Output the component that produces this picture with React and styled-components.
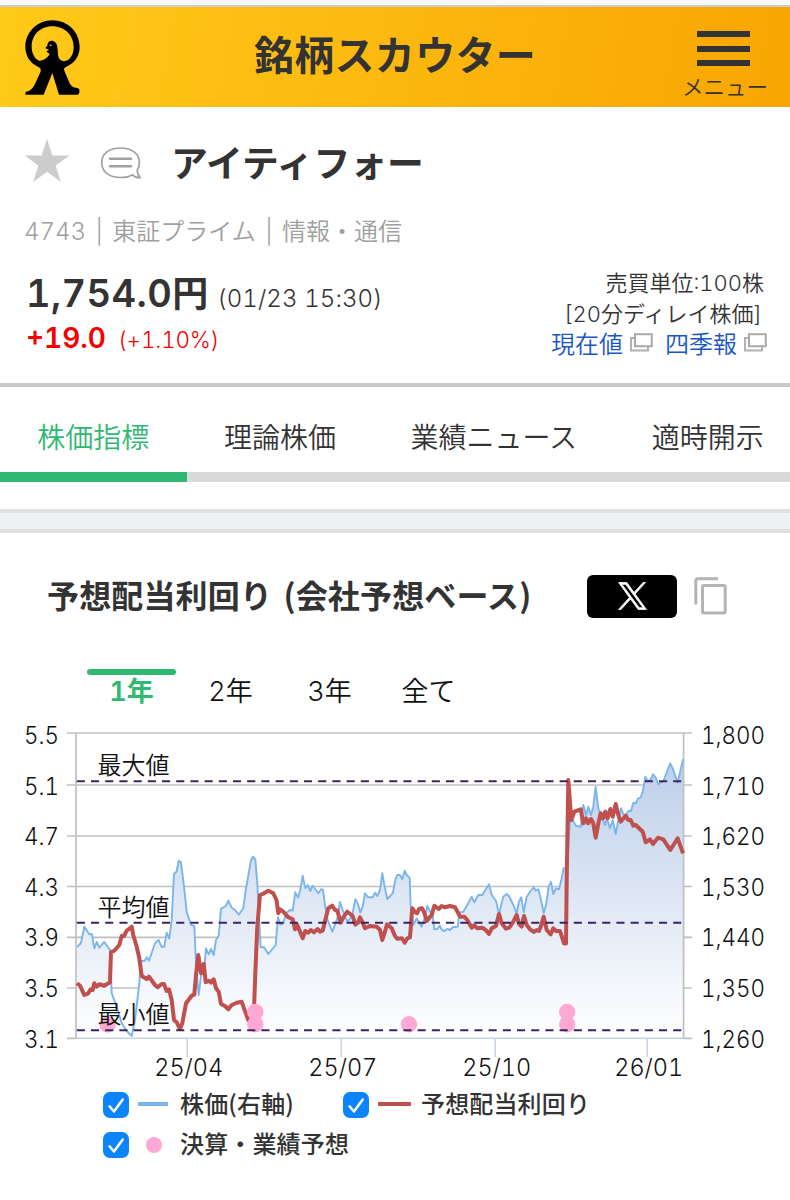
import React from "react"
import styled, { createGlobalStyle, ThemeProvider } from "styled-components"

const theme = {
  fonts: `"Inter", "Noto Sans CJK JP", sans-serif`,
  colors: {
    text: "#333333",
    green: "#2fb872",
    red: "#f50000",
    link: "#1a56c4",
    price: "#7cb5ec",
    yieldLine: "#c0504d",
    event: "#ffa8d4",
    muted: "#a0a0a0",
  },
}

const GlobalStyle = createGlobalStyle`
  * {
    box-sizing: border-box;
  }
  body {
    margin: 0;
    background: #ffffff;
    color: #333333;
    font-family: "Inter", "Noto Sans CJK JP", sans-serif;
    font-weight: 350;
    font-variant-numeric: tabular-nums;
    overflow: hidden;
  }
`

const Page = styled.div`
  width: 790px;
  height: 1200px;
  overflow: hidden;
  background: #ffffff;
  white-space: nowrap;
`

const BrowserEdge = styled.div`
  height: 7px;
  background: #fafafa;
  border-bottom: 2px solid #cccccc;
`

const Header = styled.header`
  height: 100px;
  padding: 13px 22px 0 25px;
  display: flex;
  align-items: flex-start;
  justify-content: space-between;
  background: linear-gradient(100deg, #ffca1a 0%, #fcb80e 50%, #f9a502 100%);
`

const Title = styled.h1`
  margin: 7px 0 0 28px;
  font-size: 40px;
  font-weight: 600;
  line-height: 58px;
  letter-spacing: 0.3px;
`

const MenuButton = styled.div`
  width: 86px;
  padding-top: 11px;
  display: flex;
  flex-direction: column;
  align-items: center;
  font-size: 21.5px;
  line-height: 24px;
`

const Bars = styled.div`
  width: 53px;
  height: 35px;
  margin: 0 0 9px -3px;
  display: flex;
  flex-direction: column;
  justify-content: space-between;

  span {
    height: 6px;
    background: ${({ theme }) => theme.colors.text};
  }
`

const Summary = styled.section`
  height: 280px;
  padding: 27px 23px 0 24px;
  border-bottom: 4px solid #cacaca;
`

const NameRow = styled.div`
  height: 60px;
  display: flex;
  align-items: center;

  svg {
    margin-bottom: 6px;
  }
`

const Name = styled.h2`
  margin: 0 0 0 29px;
  font-size: 36.8px;
  font-weight: 600;
  line-height: 60px;
`

const Meta = styled.div`
  height: 72px;
  font-size: 24px;
  line-height: 76px;
  color: ${({ theme }) => theme.colors.muted};
  word-spacing: 2.9px;
`

const QuoteRow = styled.div`
  display: flex;
  justify-content: space-between;
`

const QuoteLine = styled.div`
  display: flex;
  align-items: baseline;
  height: ${({ $height }) => $height}px;
  padding-left: 2px;
  line-height: ${({ $height }) => $height}px;
  color: ${({ theme, $up }) => ($up ? theme.colors.red : theme.colors.text)};
`

const Figure = styled.span`
  font-size: ${({ $size }) => $size}px;
  font-weight: ${({ $bold }) => ($bold ? 600 : 350)};
  letter-spacing: ${({ $spacing }) => $spacing || 0}px;
  margin-left: ${({ $gap }) => $gap || 0}px;
`

const Side = styled.div`
  display: flex;
  flex-direction: column;
  align-items: flex-end;
  padding-top: 2px;
  font-size: 22px;
  line-height: 31px;
`

const SideLine = styled.div`
  height: ${({ $height }) => $height || 31}px;
  display: flex;
  align-items: center;
  padding-right: ${({ $inset }) => $inset || 0}px;
`

const SideLink = styled.a`
  display: flex;
  align-items: center;
  gap: 7px;
  margin-left: 12px;
  font-size: 24px;
  color: ${({ theme }) => theme.colors.link};

  svg {
    margin-bottom: 5px;
  }
`

const Tabs = styled.nav`
  height: 95px;
  display: flex;
`

const Tab = styled.a`
  flex: none;
  padding: 0 37.3px;
  font-size: 28px;
  line-height: 102px;
  height: 95px;
  color: ${({ theme, $active }) =>
    $active ? theme.colors.green : theme.colors.text};
  border-bottom: 10px solid
    ${({ theme, $active }) => ($active ? theme.colors.green : "#dadada")};
`

const Band = styled.div`
  height: 24px;
  margin-top: 27px;
  background: #eff0f3;
  border: solid #dfe0e2;
  border-width: 4px 0;
`

const SectionHead = styled.div`
  height: 126px;
  padding: 0 63px 0 47px;
  display: flex;
  align-items: center;
`

const SectionTitle = styled.h3`
  margin: 0 0 4px;
  flex: 1;
  font-family: "Noto Sans CJK JP", sans-serif;
  font-size: 32px;
  font-weight: 600;
  line-height: 48px;
  letter-spacing: 0.15px;
  word-spacing: 4px;
`

const ShareButton = styled.a`
  width: 90px;
  height: 43px;
  margin-right: 17px;
  display: flex;
  align-items: center;
  justify-content: center;
  background: #000000;
  border-radius: 6px;
`

const Ranges = styled.div`
  height: 55px;
  margin-top: 10px;
  padding-left: 87px;
  display: flex;
  gap: 10px;
`

const Range = styled.div`
  width: 89px;
  display: flex;
  flex-direction: column;
  align-items: center;
  font-size: 27px;
  line-height: 34px;
  color: ${({ theme, $active }) => ($active ? theme.colors.green : "#111111")};
  font-weight: ${({ $active }) => ($active ? 600 : 350)};

  &::before {
    content: "";
    width: 100%;
    height: 6px;
    border-radius: 3px;
    background: ${({ $active }) => ($active ? "currentColor" : "transparent")};
  }
`

const ChartSvg = styled.svg`
  display: block;
  overflow: visible;

  text {
    font-family: ${({ theme }) => theme.fonts};
    font-size: 23.5px;
    font-weight: 350;
    fill: #111111;
  }
`

const Legend = styled.div`
  padding-left: 103px;
  display: grid;
  grid-template-columns: 240px auto;
  grid-auto-rows: 40.5px;
  justify-content: start;
`

const LegendItem = styled.label`
  display: flex;
  align-items: center;
  font-size: 24px;
  font-weight: 500;
  line-height: 40px;
  font-family: "Noto Sans CJK JP", sans-serif;
`

const LegendText = styled.span`
  padding-bottom: 3px;
  letter-spacing: 0.15px;
`

const Check = styled.span`
  flex: none;
  width: 26px;
  height: 26px;
  margin-top: 1px;
  border-radius: 7px;
  background: #0a84ff;
  display: flex;
`

const Key = styled.span`
  flex: none;
  width: ${({ $dot, $long }) => ($dot ? 16 : $long ? 33 : 30)}px;
  height: ${({ $dot }) => ($dot ? 16 : 4)}px;
  margin: ${({ $dot, $long }) =>
    $dot ? "0 18px 0 17px" : $long ? "0 10px 0 9px" : "0 12px 0 9px"};
  border-radius: ${({ $dot }) => ($dot ? "50%" : 0)};
  background: ${({ $color }) => $color};
`

const Logo = () => (
  <svg width="55" height="75" viewBox="76 61 165 225">
    <path
      fill="#000"
      fillRule="evenodd"
      d="M158 62C113 62 77 98 77 142C77 169 91 190 116 202C123 205 125 211 122 218L107 251C99 269 89 275 78 277L77 285L132 285L158 220L178 285L234 285C241 283 242 268 234 265C220 264 212 257 208 246L194 213C191 206 197 202 204 199C227 188 240 168 240 142C240 97 204 62 158 62ZM158 80C195 80 222 106 222 143C222 160 215 174 204 182C193 187 179 185 176 170C174 160 175 151 173 142C172 130 165 123 155 123C146 124 143 130 143 138L137 145C140 148 145 149 149 150L140 155C144 160 148 161 150 164C142 175 132 184 118 183C105 178 96 160 96 142C96 106 121 80 158 80Z"
    />
    <ellipse cx="153" cy="137" rx="3" ry="2.4" fill="#fec61a" />
  </svg>
)

const StarIcon = () => (
  <svg width="46" height="46" viewBox="0 0 46 46">
    <path
      fill="#cccccc"
      d="M23 1L28.3 17.4H45.4L31.6 27.5L36.9 44L23 33.8L9.1 44L14.4 27.5L.6 17.4H17.7Z"
    />
  </svg>
)

const CommentIcon = styled(({ className }) => (
  <svg className={className} width="42" height="34" viewBox="0 0 42 34">
    <g fill="none" stroke="#a0a0a0" strokeWidth="1.7" strokeLinecap="round">
      <path d="M20.500 2C9.500 2 1.700 7.500 1.700 16.500C1.700 26 9.500 31.500 20.500 31.500C25.500 31.500 29.500 30.500 32.500 28.700C34.500 31 37 32 40 31.700C38 29 37 26.500 37.300 24C38.700 22 39.400 19.500 39.400 16.500C39.400 7.500 31.500 2 20.500 2Z" />
      <path strokeWidth="2.400" d="M10 12.700H31M10 20.300H31" />
    </g>
  </svg>
))`
  margin-left: 30px;
  margin-top: 3px;
`

const WindowsIcon = () => (
  <svg width="23" height="19" viewBox="0 0 23 19">
    <path d="M5 5H1V17.500H18V14" fill="none" stroke="#b2b2b2" strokeWidth="2" />
    <rect x="5" y="1.200" width="16.800" height="12" fill="#fff" stroke="#aaa" strokeWidth="2" />
  </svg>
)

const XIcon = () => (
  <svg width="29" height="28" viewBox="-25 -25 1250 1277" preserveAspectRatio="none">
    <path
      fill="#fff"
      stroke="#fff"
      strokeWidth="36"
      d="M714.163 519.284L1160.89 0H1055.03L667.137 450.887L357.328 0H0L468.492 681.821L0 1226.37H105.866L515.491 750.218L842.672 1226.37H1200L714.137 519.284H714.163ZM569.165 687.828L521.697 619.934L144.011 79.694H306.615L611.412 515.685L658.88 583.579L1055.08 1150.3H892.476L569.165 687.854V687.828Z"
    />
  </svg>
)

const CopyIcon = () => (
  <svg width="33" height="38" viewBox="0 0 33 38" fill="none" stroke="#b4b4b4" strokeWidth="3">
    <path d="M1.800 27.500V3.500Q1.800 1.800 3.500 1.800H24" />
    <rect x="8.500" y="8.500" width="22.700" height="27.500" rx="1.500" />
  </svg>
)

const CheckIcon = () => (
  <svg width="26" height="26" viewBox="0 0 26 26" fill="none">
    <path
      d="M6.500 14.300L11 19.500L19.700 7.500"
      stroke="#fff"
      strokeWidth="2.500"
      strokeLinecap="round"
      strokeLinejoin="round"
    />
  </svg>
)

const GRID = [733, 785, 836, 886.5, 937.3, 988, 1038.3]
const LEFT_LABELS = ["5.5", "5.1", "4.7", "4.3", "3.9", "3.5", "3.1"]
const RIGHT_LABELS = ["1,800", "1,710", "1,620", "1,530", "1,440", "1,350", "1,260"]

const MONTHS = [
  { x: 187.2, label: "25/04" },
  { x: 341.3, label: "25/07" },
  { x: 495.2, label: "25/10" },
  { x: 647.2, label: "26/01" },
]

const LIMITS = [
  { y: 781.3, label: "最大値" },
  { y: 922.8, label: "平均値" },
  { y: 1030.2, label: "最小値" },
]

const EVENTS = [
  [107.5, 1024.5],
  [255.3, 1012],
  [255.3, 1024.3],
  [409, 1024.3],
  [567.2, 1012],
  [567.2, 1024.3],
]

const PRICE =
  "77,947 81,943 84.3,926.7 89.3,934.3 92,934.3 94.3,948.3 96.7,942 99.3,947.7 104.3,942 110,950 111.7,993.3 116.7,1006.7 121.7,1023.3 126.7,1031 131.7,1036 135,1020 139.3,983.3 141,961 144.7,960.7 146.7,957.3 149,960.7 155,943.3 158.7,940 161.3,946.7 164.3,946.7 166.7,932.7 169.3,938.7 171.7,920 174,874 176.7,871.3 178.7,860.7 181,862.3 184,886.7 186.7,911.7 191,925 194.3,926 196,963.3 198.7,995 201.3,973.3 204,973.3 206,948.3 208.7,954.3 211,949 213.7,955 216,940 218.7,936 221,908.7 226,906 228.3,900.7 231.7,907.7 235,910 238.7,914.7 243.3,908.3 245.7,890 248.7,873.3 251,860 253,856.7 255.3,859.3 257.3,883.3 259,916.7 260.7,947.3 264,947.3 268.3,954 275.7,945 278,917.3 280.3,924.7 283.3,923.3 286,913.3 290,910 292.7,910.7 295.3,892.3 298,897.7 300.3,890 302.7,875.7 305.3,888.3 307.7,885 310.3,891 312.7,885.7 318.3,893.3 321,889.3 323,889.7 325,905 327.7,920 332.3,931.7 335,925 337.7,916.7 340,902 342.7,910 345.3,917.3 347.7,921.7 352.3,915 355.3,899.3 358,904 360.3,912.7 362.7,906.7 365,893.3 368,897.3 372.7,897.3 375,892.7 377.3,896 380,890 382.3,873.3 385,888.3 387.3,899 392.7,893.3 395.3,880 397.3,875 400,875 402.3,879.3 404.7,870.7 406.7,875 409.7,878 410.7,906.7 413.3,925 416.7,918.3 421.7,926.7 425,917.3 427.3,906 430,911.7 432.3,913.3 434.3,929.3 437.3,929 439.7,925.7 442,930 444.7,931 447.3,929 450,930 453,927 457.7,926.7 459.3,912.7 463.3,911.7 467.3,905 471.7,896.7 474.3,902.3 478.3,895 482.3,895 489,884.3 491.7,895 496,901 499,914 503.3,896.7 506.7,894 509.3,896.7 513.3,905 516.7,913.3 519,901.7 521.3,897.3 523.7,912.3 526.7,896.7 530.7,891 533.7,887.3 535.7,890.7 538.3,889.3 540.7,898.3 543.7,913.3 546,905 548.7,886.7 551,882 553.3,894 556,888.3 559,889.3 561.7,878.3 563.7,868.3 567,868.7 570,820 572,818 575.7,825.7 580.7,826.7 583.3,805 586,815 588.3,806.7 591,815 593.3,806.7 595.7,786.7 598.3,808.3 601.7,816.7 605,825 606.7,818 610,828.3 612.7,820 615.7,834 618.3,820 621,808.3 623.3,814.3 626,815 628.3,811 631,811 633.3,802.7 635.7,803.3 638.3,798.3 640.7,797.3 642.7,791.7 645.3,776.7 647.7,781 650.3,780 653,774.3 655.7,777.3 658.3,784.3 663.3,781 670.3,763.3 673.3,770 677.7,782.7 683,759.3"

const YIELD =
  "77,983.3 80,985.7 84.3,995 88.3,993.3 90.7,989.3 92.7,990 94.3,983.3 96.7,986.7 99.3,984.3 104.3,985.7 110,982.3 111,952.3 114.3,950.7 119.3,945 121.7,936 124,936 126.7,930.7 131.7,926.7 133.3,935 136.7,946.7 139.3,958.3 141.7,976 146.7,979 149,976.7 155,985 157.7,987.3 161.7,984 164,984 166.7,991 169,989.3 171.7,1000 174,1020 176.7,1022.3 180,1029 182.3,1023.3 186,1003.3 191.7,995.7 194.3,994.7 196,975 198.3,955 201,973.3 203.7,964 205.7,982.3 209,980.7 211,982.7 213.7,979.3 216,988.3 218.7,991.7 221,1004 225,1006 228.3,1009.3 231.7,1005 236.7,1002.7 241.7,1001.7 244,1008.3 248.3,1020 253,1025 254,1010 255.3,973.3 257.3,926.7 260,895 264,893.3 268.3,890.7 273.3,893.3 276.5,900 278.3,913.3 280,909.3 283.3,911.7 288.3,917.3 292.7,919.3 295,929.3 297.3,925 302.7,938.3 305.3,931 308.3,932.7 311,930 314,932.3 317.7,929 320,931.7 322.7,930.7 325.7,918.3 328.3,908.3 332.3,905.7 335,910 337.3,910.5 340.7,922.7 343.3,917.3 347.3,911.7 352.7,916 355.3,924.7 358,922.7 360,917.3 362.7,922.7 365,928.3 370,926 376.7,926.7 380,930 382.3,940 384.7,932.7 387,924.3 391.7,928.3 395,936 397.3,938.7 402,938.3 404.7,942.7 407.3,938.3 410,937.3 411.3,920 412.3,908.3 414.7,911.7 417,913.3 419,909 422,908.3 424.3,912.7 426.7,921 431.7,915 434.3,905.7 438.7,909 441.7,906 445,907.3 450,906 455,907.3 458.3,913.3 460,916.7 464.3,916.7 467.3,920 471.7,927.7 474.3,925.3 477.3,928.3 482.3,927.7 485.7,930 489,934 491.7,928.3 496,926 499,914 501.7,923.3 506,928.7 509.3,927.7 513.3,921.7 516.7,915 519,924 521.7,926.7 524,916 526.7,925 530,929.3 534,932 536.7,930 539,931 541.3,925 543.7,916.7 546.7,930 550.7,934.3 553.3,928.3 556,931 560,931 564,943.3 566,943.5 566.7,880 568.3,780 571.3,820 574.3,811.7 580.7,809.3 583.3,823.3 586,818.3 588,823.3 591,819 593.3,823.3 595.7,837.7 598.7,821.7 600.7,813.3 603,818.3 605.3,811.7 607.7,818.3 610.3,809 612.7,816.7 615.7,804 618.3,815 620.7,821.7 625.7,815.7 628.3,820 630.7,820 633.3,825.7 635.7,825 642.7,831.7 645.7,842.3 650,839.3 653,844 658,837.7 663.3,839.3 670.3,850 677.7,838.3 683,853.3"

const YieldChart = () => (
  <ChartSvg width="790" height="360" viewBox="0 724 790 360">
    <defs>
      <linearGradient id="priceFill" gradientUnits="userSpaceOnUse" x1="0" y1="759" x2="0" y2="1038">
        <stop offset="0" stopColor="#bdcfea" />
        <stop offset="1" stopColor="#ffffff" />
      </linearGradient>
    </defs>

    {GRID.slice(0, 6).map(y => (
      <path key={y} d={`M67 ${y}H692`} stroke="#c0c0c0" strokeWidth="1.7" />
    ))}
    <path d="M67 1038.300H76M684 1038.300H692" stroke="#c0c0c0" strokeWidth="1.700" />

    <polygon points={`77,1038 ${PRICE} 683,1038`} fill="url(#priceFill)" />
    <path d="M76 1038.300H684" stroke="#c5d2e8" strokeWidth="1.500" />
    {MONTHS.map(({ x }) => (
      <path key={x} d={`M${x} 1038V1057`} stroke="#c5d2e8" strokeWidth="1.500" />
    ))}
    <path d="M76 733V1038.300M683.600 733V1038.300" stroke="#c0c0c0" strokeWidth="1.700" />

    <polyline points={PRICE} fill="none" stroke="#7cb5ec" strokeWidth="1.900" strokeLinejoin="round" />
    <polyline points={YIELD} fill="none" stroke="#c0504d" strokeWidth="4" strokeLinejoin="round" />

    {EVENTS.map(([x, y]) => (
      <circle key={`${x}-${y}`} cx={x} cy={y} r="8.200" fill="#ffa8d4" />
    ))}

    {LIMITS.map(({ y, label }) => (
      <g key={label}>
        <path d={`M76.800 ${y}H683`} stroke="#3c2460" strokeWidth="1.900" strokeDasharray="8.100 6.100" />
        <text x="97.500" y={y - 7} style={{ fontSize: 24 }}>
          {label}
        </text>
      </g>
    ))}

    {GRID.map((y, i) => (
      <g key={y}>
        <text x="24" y={744 + i * 50.6} textLength="35" lengthAdjust="spacingAndGlyphs">
          {LEFT_LABELS[i]}
        </text>
        <text x="701" y={744 + i * 50.6} textLength="64" lengthAdjust="spacingAndGlyphs">
          {RIGHT_LABELS[i]}
        </text>
      </g>
    ))}

    {MONTHS.map(({ x, label }) => (
      <text key={label} x={x - 33} y="1076" textLength="69" lengthAdjust="spacingAndGlyphs">
        {label}
      </text>
    ))}
  </ChartSvg>
)

const App = () => (
  <ThemeProvider theme={theme}>
    <GlobalStyle />
    <Page lang="ja">
      <BrowserEdge />
      <Header>
        <Logo />
        <Title>銘柄スカウター</Title>
        <MenuButton>
          <Bars>
            <span />
            <span />
            <span />
          </Bars>
          メニュー
        </MenuButton>
      </Header>

      <Summary>
        <NameRow>
          <StarIcon />
          <CommentIcon />
          <Name>アイティフォー</Name>
        </NameRow>
        <Meta>4743 | 東証プライム | 情報・通信</Meta>
        <QuoteRow>
          <div>
            <QuoteLine $height={54}>
              <Figure $size={38} $bold $spacing={0.4}>
                1,754.0
              </Figure>
              <Figure $size={36} $bold>
                円
              </Figure>
              <Figure $size={24} $gap={9} $spacing={0.1}>
                (01/23 15:30)
              </Figure>
            </QuoteLine>
            <QuoteLine $height={37} $up>
              <Figure $size={28} $bold>
                +19.0
              </Figure>
              <Figure $size={22.5} $gap={12} $spacing={-0.2}>
                (+1.10%)
              </Figure>
            </QuoteLine>
          </div>
          <Side>
            <SideLine $inset={3}>売買単位:100株</SideLine>
            <SideLine $inset={5} $height={30}>
              [20分ディレイ株価]
            </SideLine>
            <SideLine>
              <SideLink>
                現在値
                <WindowsIcon />
              </SideLink>
              <SideLink>
                四季報
                <WindowsIcon />
              </SideLink>
            </SideLine>
          </Side>
        </QuoteRow>
      </Summary>

      <Tabs>
        <Tab $active>株価指標</Tab>
        <Tab>理論株価</Tab>
        <Tab>業績ニュース</Tab>
        <Tab>適時開示</Tab>
      </Tabs>
      <Band />

      <SectionHead>
        <SectionTitle>予想配当利回り (会社予想ベース)</SectionTitle>
        <ShareButton>
          <XIcon />
        </ShareButton>
        <CopyIcon />
      </SectionHead>

      <Ranges>
        <Range $active>1年</Range>
        <Range>2年</Range>
        <Range>3年</Range>
        <Range>全て</Range>
      </Ranges>
      <YieldChart />

      <Legend>
        <LegendItem>
          <Check>
            <CheckIcon />
          </Check>
          <Key $color={theme.colors.price} />
          <LegendText>株価(右軸)</LegendText>
        </LegendItem>
        <LegendItem>
          <Check>
            <CheckIcon />
          </Check>
          <Key $long $color={theme.colors.yieldLine} />
          <LegendText>予想配当利回り</LegendText>
        </LegendItem>
        <LegendItem>
          <Check>
            <CheckIcon />
          </Check>
          <Key $dot $color={theme.colors.event} />
          <LegendText>決算・業績予想</LegendText>
        </LegendItem>
      </Legend>
    </Page>
  </ThemeProvider>
)

export default App
